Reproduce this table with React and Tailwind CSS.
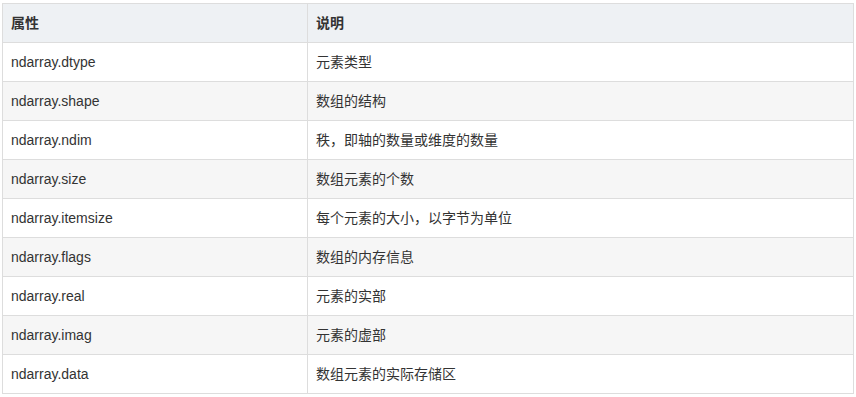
import React from "react";

const rows = [
  ["ndarray.dtype", "元素类型"],
  ["ndarray.shape", "数组的结构"],
  ["ndarray.ndim", "秩，即轴的数量或维度的数量"],
  ["ndarray.size", "数组元素的个数"],
  ["ndarray.itemsize", "每个元素的大小，以字节为单位"],
  ["ndarray.flags", "数组的内存信息"],
  ["ndarray.real", "元素的实部"],
  ["ndarray.imag", "元素的虚部"],
  ["ndarray.data", "数组元素的实际存储区"],
];

const App = () => {
  return (
    <div
      className="pt-[3px] pl-[2px] bg-white text-[14px] text-[#333]"
      style={{ fontFamily: '"Liberation Sans", Arial, "Noto Sans CJK SC", sans-serif' }}
    >
      <table className="w-[852px] border-collapse table-fixed">
        <colgroup>
          <col className="w-[305px]" />
          <col />
        </colgroup>
        <thead>
          <tr className="h-[39px] bg-[#eef1f4]">
            <th className="border border-[#ddd] px-2 text-left font-bold">属性</th>
            <th className="border border-[#ddd] px-2 text-left font-bold">说明</th>
          </tr>
        </thead>
        <tbody>
          {rows.map(([name, desc], i) => (
            <tr key={name} className={i % 2 === 1 ? "h-[39px] bg-[#f6f6f6]" : "h-[39px] bg-white"}>
              <td className="border border-[#ddd] px-2">{name}</td>
              <td className="border border-[#ddd] px-2">{desc}</td>
            </tr>
          ))}
        </tbody>
      </table>
    </div>
  );
};

export default App;
